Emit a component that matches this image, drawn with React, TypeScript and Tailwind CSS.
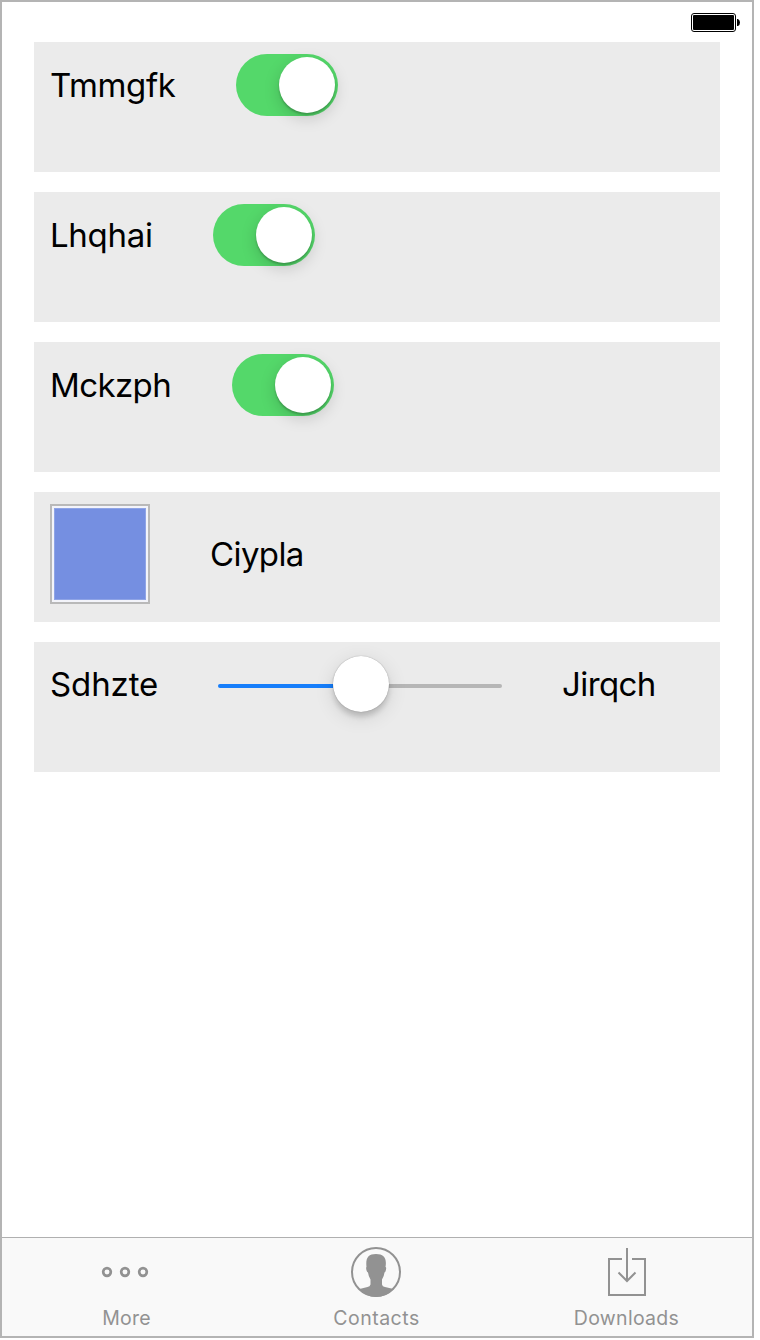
import type { ReactNode } from "react";

function Battery() {
  return (
    <svg width="50" height="20" viewBox="0 0 50 20">
      <rect x="0.5" y="0.5" width="44" height="18" rx="2.5" fill="#fff" stroke="#000" />
      <rect x="2" y="2" width="41" height="15" rx="1" fill="#000" />
      <path d="M46 6h1q2 1 2 3.500t-2 3.500h-1z" fill="#000" />
    </svg>
  );
}

function Card({ children }: { children: ReactNode }) {
  return (
    <section className="flex h-[130px] w-[686px] items-start gap-[60px] bg-[#ebebeb] px-4 pt-3">
      {children}
    </section>
  );
}

function Switch() {
  return (
    <div className="flex h-[62px] w-[102px] items-center justify-end overflow-visible rounded-full bg-[#54d86a] pr-[3px]">
      <div className="size-14 rounded-full bg-white shadow-[0_2px_2px_rgba(0,0,0,0.2),0_5px_16px_rgba(0,0,0,0.17)]" />
    </div>
  );
}

const label = "flex h-[62px] items-center whitespace-nowrap text-[33px] leading-none";

function Tab({ title, spacing, children }: { title: string; spacing: string; children: ReactNode }) {
  return (
    <div className="flex w-[250px] flex-col items-center">
      <div className="flex h-[68px] items-center">{children}</div>
      <span className={"-ml-px text-[19.5px] leading-6 " + spacing}>{title}</span>
    </div>
  );
}

export default function App() {
  return (
    <main className="flex h-[1340px] w-[760px] items-start bg-white font-[Inter,sans-serif] text-black">
      <div className="flex h-[1338px] w-[754px] flex-col border-2 border-[#b4b4b4]">
        <header className="flex h-10 shrink-0 justify-end pt-[11px] pr-[11px]">
          <Battery />
        </header>
        <div className="flex grow flex-col gap-5 pl-8">
          <Card>
            <span className={label + " w-[126px] tracking-[-0.4px]"}>Tmmgfk</span>
            <Switch />
          </Card>
          <Card>
            <span className={label + " w-[103px] tracking-[-0.3px]"}>Lhqhai</span>
            <Switch />
          </Card>
          <Card>
            <span className={label + " w-[122px] tracking-[-0.6px]"}>Mckzph</span>
            <Switch />
          </Card>
          <Card>
            <div className="size-[100px] border-2 border-[#b9b9b9] bg-[#f3f4fa] p-0.5">
              <div className="size-full border border-[#8fa4e6] bg-[#758fe1]" />
            </div>
            <span className={label + " mt-[19px] tracking-[-0.6px]"}>Ciypla</span>
          </Card>
          <Card>
            <span className={label + " -mt-px w-[108px] tracking-[-0.1px]"}>Sdhzte</span>
            <div className="flex h-[60px] w-[284px] items-center">
              <div className="mt-1 h-1 w-[115px] shrink-0 rounded-l-full bg-[#167efb]" />
              <div className="z-10 size-14 shrink-0 rounded-full bg-white shadow-[0_0_1px_rgba(0,0,0,0.4),0_5px_5px_rgba(0,0,0,0.15),0_5px_20px_rgba(0,0,0,0.12)]" />
              <div className="mt-1 h-1 grow rounded-r-full bg-[#b6b6b6]" />
            </div>
            <span className={label + " -mt-px tracking-[-0.6px]"}>Jirqch</span>
          </Card>
        </div>
        <nav className="flex h-[99px] shrink-0 border-t border-[#b0b0b0] bg-[#f9f9f9] text-[#929292]">
          <Tab title="More" spacing="tracking-[0.2px]">
            <svg width="50" height="50" viewBox="0 0 50 50" fill="none" stroke="currentColor" strokeWidth="2.700" className="-ml-1">
              <circle cx="7" cy="25" r="3.800" />
              <circle cx="25" cy="25" r="3.800" />
              <circle cx="43" cy="25" r="3.800" />
            </svg>
          </Tab>
          <Tab title="Contacts" spacing="tracking-[0.5px]">
            <svg width="50" height="50" viewBox="0 0 50 50" className="-ml-0.5">
              <circle cx="25" cy="25" r="24" fill="none" stroke="currentColor" strokeWidth="2" />
              <path
                d="M15.500 20C14.500 11 17 7 25 7s11 4 9.500 13q1 0 .5 2.500-.4 2.500-1.500 3-.5 4-2.500 7v5q.3 2 3 2.500l8.500 2Q35 50 25 50T8.500 42l8-2q2.500-.5 3-2.500v-5q-2-3-2.500-7-1.200-.5-1.700-3-.4-2.500.2-2.500z"
                fill="currentColor"
              />
            </svg>
          </Tab>
          <Tab title="Downloads" spacing="tracking-[0.3px]">
            <svg width="50" height="50" viewBox="0 0 50 50" fill="none" stroke="currentColor" strokeWidth="2">
              <path d="M20 12H7v36h36V12H30M25 1v33M16.500 25.500l8.500 8.500 8.500-8.500" />
            </svg>
          </Tab>
        </nav>
      </div>
    </main>
  );
}
